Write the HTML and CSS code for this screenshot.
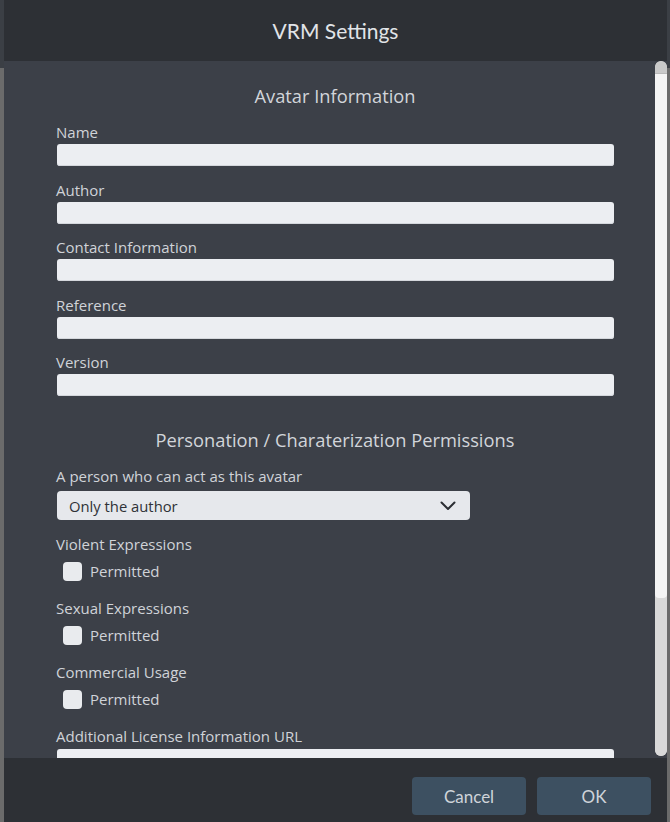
FILE: index.html
```html
<!DOCTYPE html>
<html lang="en">
<head>
<meta charset="utf-8">
<title>VRM Settings</title>
<link rel="stylesheet" href="styles.css">
</head>
<body>
<div class="dialog">
  <header class="dialog-header">VRM Settings</header>
  <div class="dialog-body">
    <div class="content">
      <h2 class="section-title first">Avatar Information</h2>
      <div class="field"><label class="label">Name</label><div class="input"></div></div>
      <div class="field"><label class="label">Author</label><div class="input"></div></div>
      <div class="field"><label class="label">Contact Information</label><div class="input"></div></div>
      <div class="field"><label class="label">Reference</label><div class="input"></div></div>
      <div class="field"><label class="label">Version</label><div class="input"></div></div>

      <h2 class="section-title second">Personation / Charaterization Permissions</h2>
      <div class="field select-field">
        <label class="label">A person who can act as this avatar</label>
        <div class="select">
          <span>Only the author</span>
          <svg class="chevron" width="16" height="10" viewBox="0 0 16 10"><polyline points="1.5,1.5 8,8 14.5,1.5" fill="none" stroke="#2b2e33" stroke-width="2" stroke-linecap="round" stroke-linejoin="round"/></svg>
        </div>
      </div>
      <div class="check-field">
        <div class="label">Violent Expressions</div>
        <div class="check-row"><span class="checkbox"></span><span class="check-text">Permitted</span></div>
      </div>
      <div class="check-field">
        <div class="label">Sexual Expressions</div>
        <div class="check-row"><span class="checkbox"></span><span class="check-text">Permitted</span></div>
      </div>
      <div class="check-field">
        <div class="label">Commercial Usage</div>
        <div class="check-row"><span class="checkbox"></span><span class="check-text">Permitted</span></div>
      </div>
      <div class="field url-field"><label class="label">Additional License Information URL</label><div class="input"></div></div>
    </div>
    <div class="scrollbar">
      <div class="sb-cap"></div>
      <div class="sb-thumb"></div>
      <div class="sb-track"></div>
    </div>
  </div>
  <footer class="dialog-footer">
    <button class="btn">Cancel</button>
    <button class="btn">OK</button>
  </footer>
</div>
</body>
</html>
```

FILE: styles.css
```css
html, body {
  margin: 0;
  padding: 0;
}
body {
  width: 670px;
  height: 822px;
  overflow: hidden;
  background: linear-gradient(to bottom, #3b3f45 0, #3b3f45 68px, #6b6b6b 68px, #6b6b6b 100%);
  font-family: "Open Sans", Lato, sans-serif;
}
.dialog {
  margin-left: 4px;
  width: 663px;
  height: 822px;
  display: flex;
  flex-direction: column;
  background: #2d3035;
}
.dialog-header {
  height: 61px;
  flex: none;
  display: flex;
  align-items: center;
  justify-content: center;
  color: #e1e4e8;
  font-family: Lato, sans-serif;
  font-size: 21px;
  padding-bottom: 1px;
  box-sizing: border-box;
}
.dialog-body {
  height: 697px;
  flex: none;
  display: flex;
  background: #3c4048;
  overflow: hidden;
}
.content {
  flex: 1;
  padding: 0 41px 0 52px;
  overflow: hidden;
}
.section-title {
  margin: 0;
  font-weight: normal;
  font-size: 18.3px;
  line-height: 24px;
  text-align: center;
  color: #d2d5da;
}
.section-title.first { margin-top: 23px; }
.section-title.second { margin-top: 32px; }
.field {
  display: flex;
  flex-direction: column;
  margin-top: 14.5px;
}
.section-title + .field { margin-top: 15px; }
.label {
  display: block;
  font-size: 15px;
  line-height: 18px;
  color: #d0d3d8;
}
.input {
  margin: 3px 0 0 1px;
  height: 22px;
  background: #eceef2;
  border-radius: 3px;
  box-shadow: inset 0 -1px 0 #d4d7dc;
}
.select-field { margin-top: 16px; }
.select {
  margin: 6px 0 0 1px;
  width: 413px;
  height: 29px;
  box-sizing: border-box;
  padding: 0 14px 0 12px;
  background: #e6e8ec;
  border-radius: 4px;
  display: flex;
  align-items: center;
  justify-content: space-between;
  font-size: 14.8px;
  color: #2f3237;
}
.chevron { display: block; margin-top: 1px; }
.check-field {
  margin-top: 15px;
}
.check-field + .check-field { margin-top: 16px; }
.check-row {
  margin-top: 6px;
  height: 24px;
  display: flex;
  align-items: center;
  padding-left: 7px;
}
.checkbox {
  width: 19px;
  height: 19px;
  border-radius: 4px;
  background: #e9ebee;
  flex: none;
}
.check-text {
  margin-left: 8px;
  font-size: 15px;
  color: #d0d3d8;
}
.url-field { margin-top: 16px; }
.url-field .input { margin-top: 4px; }
.scrollbar {
  width: 12px;
  flex: none;
  display: flex;
  flex-direction: column;
  border-radius: 6px;
  overflow: hidden;
  background: #d8d8d8;
  margin-bottom: 2px;
}
.sb-cap {
  height: 12px;
  background: #c9c9c9;
  border-radius: 6px 6px 0 0;
}
.sb-thumb {
  height: 524px;
  background: #f4f4f4;
  border-radius: 0 0 4px 4px;
  border-top: 1px solid #b9b9b9;
}
.sb-track {
  flex: 1;
  background: #d9d9d9;
}
.dialog-footer {
  flex: 1;
  display: flex;
  justify-content: flex-end;
  align-items: flex-start;
  gap: 11px;
  padding: 19px 16px 0 0;
}
.btn {
  width: 114px;
  height: 38px;
  border: none;
  border-radius: 4px;
  background: #3d5061;
  color: #cfd4da;
  font-family: Lato, sans-serif;
  font-size: 17px;
  padding: 0;
}
```
